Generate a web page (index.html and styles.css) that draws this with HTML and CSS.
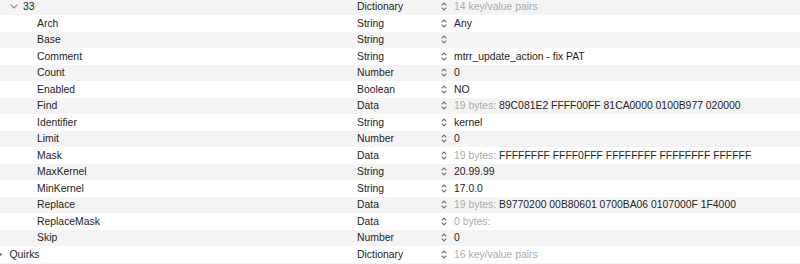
FILE: index.html
```html
<!DOCTYPE html>
<html>
<head>
<meta charset="utf-8">
<link rel="stylesheet" href="styles.css">
</head>
<body>
<div class="outline">
  <div class="row">
    <div class="key lvl1"><svg class="disc-open" width="8" height="5" viewBox="0 0 8 5"><path d="M0.6 0.6 L4 4 L7.4 0.6" fill="none" stroke="#8a8a8a" stroke-width="1.1"/></svg>33</div>
    <div class="type">Dictionary</div>
    <div class="val"><svg class="step" width="6" height="9" viewBox="0 0 6 9"><path d="M0.7 3.4 L3 1.1 L5.3 3.4 M0.7 5.6 L3 7.9 L5.3 5.6" fill="none" stroke="#6e6e6e" stroke-width="1.1"/></svg><span class="muted">14 key/value pairs</span></div>
  </div>
  <div class="row">
    <div class="key lvl2">Arch</div><div class="type">String</div>
    <div class="val"><svg class="step" width="6" height="9" viewBox="0 0 6 9"><path d="M0.7 3.4 L3 1.1 L5.3 3.4 M0.7 5.6 L3 7.9 L5.3 5.6" fill="none" stroke="#6e6e6e" stroke-width="1.1"/></svg><span>Any</span></div>
  </div>
  <div class="row">
    <div class="key lvl2">Base</div><div class="type">String</div>
    <div class="val"><svg class="step" width="6" height="9" viewBox="0 0 6 9"><path d="M0.7 3.4 L3 1.1 L5.3 3.4 M0.7 5.6 L3 7.9 L5.3 5.6" fill="none" stroke="#6e6e6e" stroke-width="1.1"/></svg><span></span></div>
  </div>
  <div class="row">
    <div class="key lvl2">Comment</div><div class="type">String</div>
    <div class="val"><svg class="step" width="6" height="9" viewBox="0 0 6 9"><path d="M0.7 3.4 L3 1.1 L5.3 3.4 M0.7 5.6 L3 7.9 L5.3 5.6" fill="none" stroke="#6e6e6e" stroke-width="1.1"/></svg><span>mtrr_update_action - fix PAT</span></div>
  </div>
  <div class="row">
    <div class="key lvl2">Count</div><div class="type">Number</div>
    <div class="val"><svg class="step" width="6" height="9" viewBox="0 0 6 9"><path d="M0.7 3.4 L3 1.1 L5.3 3.4 M0.7 5.6 L3 7.9 L5.3 5.6" fill="none" stroke="#6e6e6e" stroke-width="1.1"/></svg><span>0</span></div>
  </div>
  <div class="row">
    <div class="key lvl2">Enabled</div><div class="type">Boolean</div>
    <div class="val"><svg class="step" width="6" height="9" viewBox="0 0 6 9"><path d="M0.7 3.4 L3 1.1 L5.3 3.4 M0.7 5.6 L3 7.9 L5.3 5.6" fill="none" stroke="#6e6e6e" stroke-width="1.1"/></svg><span>NO</span></div>
  </div>
  <div class="row">
    <div class="key lvl2">Find</div><div class="type">Data</div>
    <div class="val"><svg class="step" width="6" height="9" viewBox="0 0 6 9"><path d="M0.7 3.4 L3 1.1 L5.3 3.4 M0.7 5.6 L3 7.9 L5.3 5.6" fill="none" stroke="#6e6e6e" stroke-width="1.1"/></svg><span><span class="muted">19 bytes:</span> 89C081E2 FFFF00FF 81CA0000 0100B977 020000</span></div>
  </div>
  <div class="row">
    <div class="key lvl2">Identifier</div><div class="type">String</div>
    <div class="val"><svg class="step" width="6" height="9" viewBox="0 0 6 9"><path d="M0.7 3.4 L3 1.1 L5.3 3.4 M0.7 5.6 L3 7.9 L5.3 5.6" fill="none" stroke="#6e6e6e" stroke-width="1.1"/></svg><span>kernel</span></div>
  </div>
  <div class="row">
    <div class="key lvl2">Limit</div><div class="type">Number</div>
    <div class="val"><svg class="step" width="6" height="9" viewBox="0 0 6 9"><path d="M0.7 3.4 L3 1.1 L5.3 3.4 M0.7 5.6 L3 7.9 L5.3 5.6" fill="none" stroke="#6e6e6e" stroke-width="1.1"/></svg><span>0</span></div>
  </div>
  <div class="row">
    <div class="key lvl2">Mask</div><div class="type">Data</div>
    <div class="val"><svg class="step" width="6" height="9" viewBox="0 0 6 9"><path d="M0.7 3.4 L3 1.1 L5.3 3.4 M0.7 5.6 L3 7.9 L5.3 5.6" fill="none" stroke="#6e6e6e" stroke-width="1.1"/></svg><span><span class="muted">19 bytes:</span> FFFFFFFF FFFF0FFF FFFFFFFF FFFFFFFF FFFFFF</span></div>
  </div>
  <div class="row">
    <div class="key lvl2">MaxKernel</div><div class="type">String</div>
    <div class="val"><svg class="step" width="6" height="9" viewBox="0 0 6 9"><path d="M0.7 3.4 L3 1.1 L5.3 3.4 M0.7 5.6 L3 7.9 L5.3 5.6" fill="none" stroke="#6e6e6e" stroke-width="1.1"/></svg><span>20.99.99</span></div>
  </div>
  <div class="row">
    <div class="key lvl2">MinKernel</div><div class="type">String</div>
    <div class="val"><svg class="step" width="6" height="9" viewBox="0 0 6 9"><path d="M0.7 3.4 L3 1.1 L5.3 3.4 M0.7 5.6 L3 7.9 L5.3 5.6" fill="none" stroke="#6e6e6e" stroke-width="1.1"/></svg><span>17.0.0</span></div>
  </div>
  <div class="row">
    <div class="key lvl2">Replace</div><div class="type">Data</div>
    <div class="val"><svg class="step" width="6" height="9" viewBox="0 0 6 9"><path d="M0.7 3.4 L3 1.1 L5.3 3.4 M0.7 5.6 L3 7.9 L5.3 5.6" fill="none" stroke="#6e6e6e" stroke-width="1.1"/></svg><span><span class="muted">19 bytes:</span> B9770200 00B80601 0700BA06 0107000F 1F4000</span></div>
  </div>
  <div class="row">
    <div class="key lvl2">ReplaceMask</div><div class="type">Data</div>
    <div class="val"><svg class="step" width="6" height="9" viewBox="0 0 6 9"><path d="M0.7 3.4 L3 1.1 L5.3 3.4 M0.7 5.6 L3 7.9 L5.3 5.6" fill="none" stroke="#6e6e6e" stroke-width="1.1"/></svg><span class="muted">0 bytes:</span></div>
  </div>
  <div class="row">
    <div class="key lvl2">Skip</div><div class="type">Number</div>
    <div class="val"><svg class="step" width="6" height="9" viewBox="0 0 6 9"><path d="M0.7 3.4 L3 1.1 L5.3 3.4 M0.7 5.6 L3 7.9 L5.3 5.6" fill="none" stroke="#6e6e6e" stroke-width="1.1"/></svg><span>0</span></div>
  </div>
  <div class="row">
    <div class="key lvl0"><svg class="disc-closed" width="3" height="5" viewBox="0 0 3 5"><path d="M0 0.5 L2.6 2.5 L0 4.5 Z" fill="#8a8a8a"/></svg>Quirks</div>
    <div class="type">Dictionary</div>
    <div class="val"><svg class="step" width="6" height="9" viewBox="0 0 6 9"><path d="M0.7 3.4 L3 1.1 L5.3 3.4 M0.7 5.6 L3 7.9 L5.3 5.6" fill="none" stroke="#6e6e6e" stroke-width="1.1"/></svg><span class="muted">16 key/value pairs</span></div>
  </div>
  <div class="row tail"></div>
</div>
</body>
</html>
```
FILE: styles.css
```css
html, body {
  margin: 0;
  padding: 0;
  background: #ffffff;
}
body {
  font-family: "Liberation Sans", Arial, sans-serif;
  font-size: 10.4px;
  color: #242424;
  overflow: hidden;
}
.outline {
  margin-top: -1.5px;
}
.row {
  display: grid;
  grid-template-columns: 357px 84px 1fr;
  height: 16.5px;
  align-items: center;
  white-space: nowrap;
}
.row:nth-child(odd) {
  background: #f4f4f4;
}
.row.tail {
  height: 1.5px;
}
.key {
  display: flex;
  align-items: center;
  position: relative;
}
.lvl0 { padding-left: 9.5px; }
.lvl1 { padding-left: 23px; }
.lvl2 { padding-left: 37px; }
.disc-open {
  position: absolute;
  left: 9.5px;
  top: 50%;
  margin-top: -3px;
}
.disc-closed {
  position: absolute;
  left: 0;
  top: 50%;
  margin-top: -2.5px;
}
.val {
  display: flex;
  align-items: center;
  gap: 7px;
}
.step {
  flex: none;
}
.muted {
  color: #ababab;
}
```
